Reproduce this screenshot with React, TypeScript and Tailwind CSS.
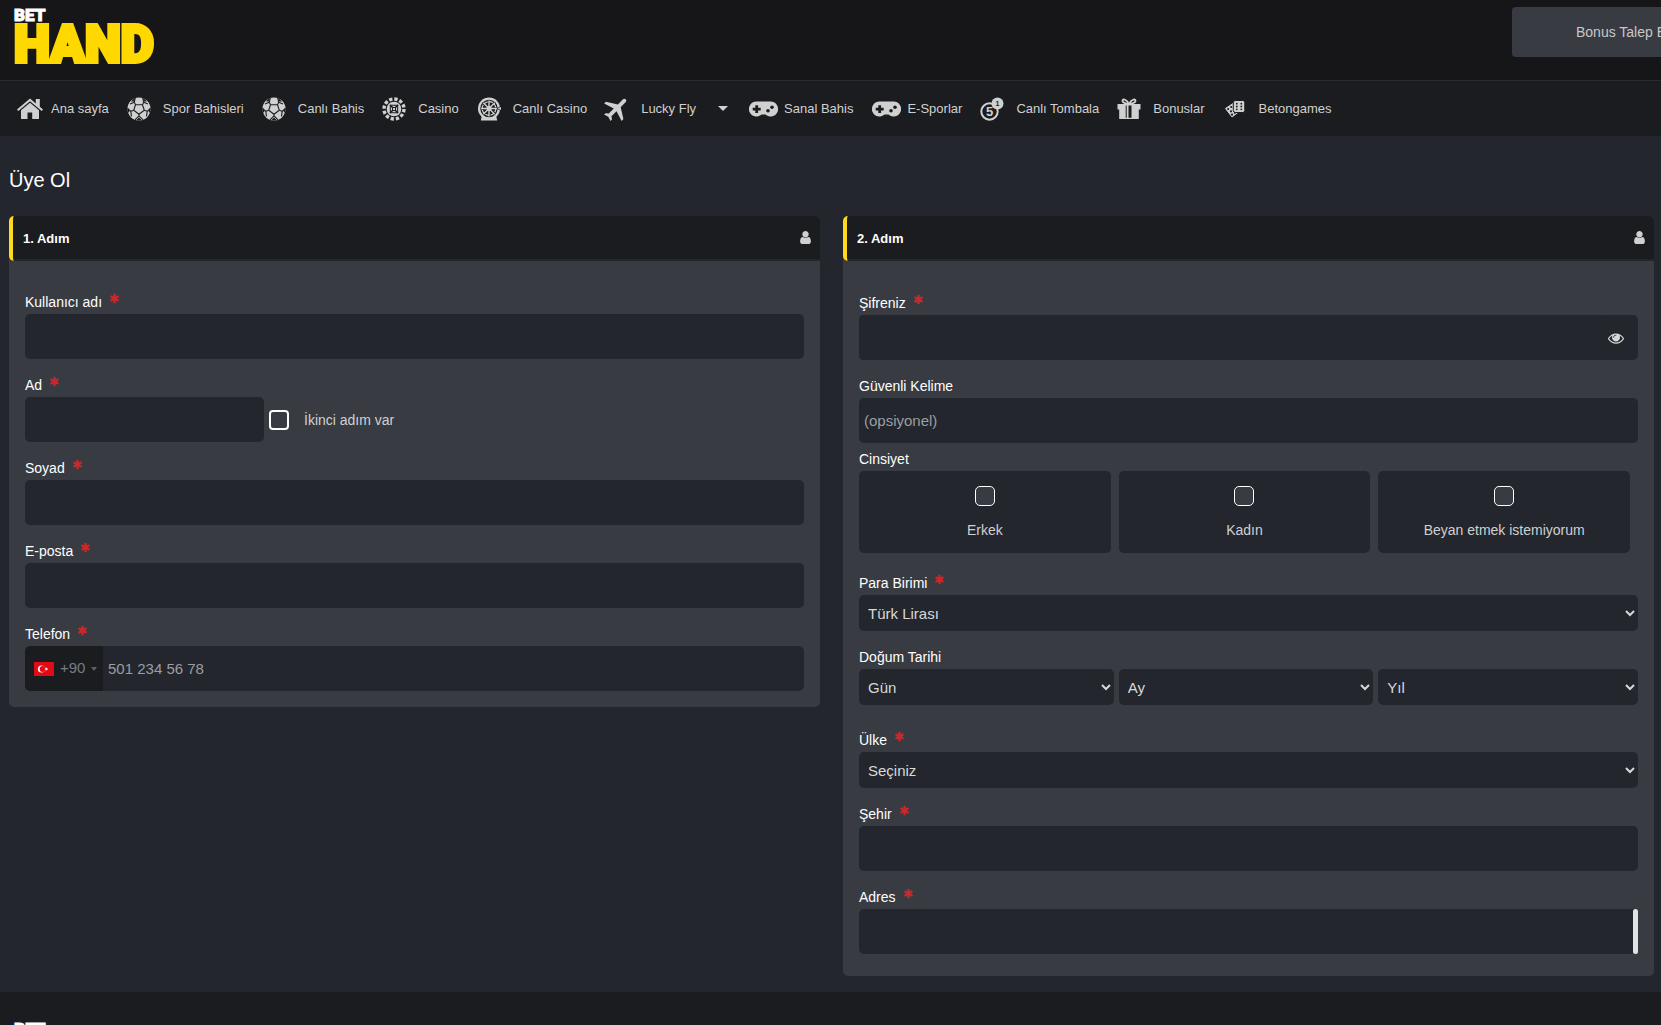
import type { ReactNode } from "react";

const INPUT = "h-[45px] w-full rounded-[5px] bg-[#23262d] px-[5px] text-[15px] text-[#d8d8d8] placeholder:text-[#9c9da0] outline-none";
const SELECT = "h-9 w-full rounded-[5px] bg-[#23262d] pl-[5px] text-[15px] text-[#d8d8d8] outline-none";

function HomeIcon() {
  return (
    <svg width="26" height="22" viewBox="0 0 26 22" fill="currentColor">
      <path d="M13 .5 0 11.500 1.300 13 13 3.300 24.700 13l1.300-1.500-3.200-2.700V1h-4v4.400z" />
      <path d="M13 4.800 4 12.300V21h6.500v-6.500h4.700V21H22v-8.700z" />
    </svg>
  );
}

function BallIcon() {
  return (
    <svg width="24" height="24" viewBox="0 0 24 24">
      <circle cx="12" cy="12" r="11.500" fill="currentColor" />
      <g stroke="#1b1c1f" strokeWidth="1.100" fill="none">
        <path d="M8.500 7.800h7l1.800 5.500-5.300 4-5.300-4z" />
        <path d="M8.500 7.800 7.300 5.200M15.500 7.800l1.200-2.600M17.300 13.300l2.900 1M12 17.300v1.500M6.700 13.300l-2.900 1" />
        <path d="M7.300 5.200 8.300.8M16.700 5.200l-1-4.400M7.300 5.200 3 7M16.700 5.200 21 7" />
        <path d="M3.800 14.300.7 11.500M3.800 14.300l.7 5M20.200 14.300l3.100-2.800M20.200 14.300l-.7 5" />
        <path d="M12 18.800 8 22.800M12 18.800l4 4" />
      </g>
      <g fill="#1b1c1f">
        <path d="M7.800.8 7.300 4.500 4 4.500zM16.200.8l.5 3.700h3.300zM.4 10.500l2.200 3.500-1.600 2zM23.600 10.500 21.400 14l1.600 2zM12 20.500l3 3H9z" />
      </g>
    </svg>
  );
}

function ChipIcon() {
  return (
    <svg width="24" height="24" viewBox="0 0 24 24" fill="none" stroke="currentColor">
      <circle cx="12" cy="12" r="10" strokeWidth="3.400" strokeDasharray="3.300 1.936" />
      <circle cx="12" cy="12" r="7.300" fill="currentColor" stroke="none" />
      <path d="M12 6.800 17.200 12 12 17.200 6.800 12z" stroke="#1b1c1f" strokeWidth="1" transform="rotate(45 12 12)" />
      <path d="m8 8 2.800 2.800M16 8l-2.800 2.800M8 16l2.800-2.800M16 16l-2.800-2.800" stroke="#1b1c1f" strokeWidth="1.600" />
      <path d="M10.500 10.500h3v3h-3z" stroke="#1b1c1f" />
    </svg>
  );
}

function RouletteIcon() {
  return (
    <svg width="24" height="24" viewBox="0 0 24 24">
      <path d="M5.500 16h13l1.700 7.500H3.800z" fill="currentColor" />
      <circle cx="12" cy="11.500" r="11" fill="currentColor" />
      <circle cx="12" cy="11.500" r="8.700" fill="#1b1c1f" />
      <circle cx="12" cy="11.500" r="6.800" fill="none" stroke="currentColor" strokeWidth="1.200" strokeDasharray="3.800 1.540" />
      <path
        d="M12 3.500v16M4 11.500h16M6.300 5.800l11.400 11.400M17.700 5.800 6.300 17.200"
        stroke="currentColor"
        strokeWidth="1.400"
      />
      <circle cx="12" cy="11.500" r="2.500" fill="currentColor" />
      <path d="M19.500 11.500 24 9v5z" fill="#1b1c1f" />
      <path d="m20.500 11.500 3.500-1.500v3z" fill="currentColor" />
    </svg>
  );
}

function PlaneIcon() {
  return (
    <svg width="24" height="24" viewBox="0 0 24 24" fill="currentColor" className="overflow-visible">
      <path
        transform="rotate(45 12 12) translate(-3.600 -3.600) scale(1.300)"
        d="M21 16v-2l-8-5V3.500c0-.83-.67-1.500-1.500-1.500S10 2.670 10 3.500V9l-8 5v2l8-2.500V19l-2 1.500V22l3.500-1 3.500 1v-1.500L13 19v-5.500l8 2.500z"
      />
    </svg>
  );
}

function GamepadIcon() {
  return (
    <svg width="29" height="16" viewBox="0 0 29 16">
      <path d="M7.500.5h14a7.500 7.500 0 1 1-5 13h-4a7.500 7.500 0 1 1-5-13z" fill="currentColor" />
      <path d="M6.300 4.300h2.800v2.500h2.600v2.700H9.100V12H6.300V9.500H3.700V6.800h2.600z" fill="#1b1c1f" />
      <circle cx="19" cy="9.800" r="1.800" fill="#1b1c1f" />
      <circle cx="23" cy="6.300" r="1.800" fill="#1b1c1f" />
    </svg>
  );
}

function BingoIcon() {
  return (
    <svg width="24" height="24" viewBox="0 0 24 24" fontFamily="Liberation Sans, sans-serif" fontWeight="700" textAnchor="middle">
      <circle cx="9.500" cy="14.500" r="8.200" fill="none" stroke="currentColor" strokeWidth="2" />
      <circle cx="17.500" cy="6.500" r="6" fill="currentColor" />
      <text x="9.500" y="19" fontSize="13" fill="currentColor">5</text>
      <text x="17.500" y="9" fontSize="7" fill="#1b1c1f">1</text>
    </svg>
  );
}

function GiftIcon() {
  return (
    <svg width="24" height="22" viewBox="0 0 24 22">
      <g fill="none" stroke="currentColor" strokeWidth="1.800">
        <path d="M12 6C10 1.500 5.500.2 5.500 3c0 2.300 3.500 2.500 6.500 3zM12 6c2-4.500 6.500-5.800 6.500-3 0 2.300-3.500 2.500-6.500 3z" />
      </g>
      <path d="M.5 6h23v5.500h-1.700V21H2.200v-9.500H.5z" fill="currentColor" />
      <path d="M8.700 7.500h1v12.200h-1zM11.500 7.500h3v12.200h-3z" fill="#1b1c1f" />
    </svg>
  );
}

function DiceIcon() {
  return (
    <svg width="22" height="20" viewBox="0 0 22 20">
      <path d="m1.500 9.500 7.500-5L14.500 13 8 18z" fill="currentColor" stroke="currentColor" strokeLinejoin="round" />
      <rect x="9.300" y="1.500" width="11.500" height="12" rx="2" fill="currentColor" stroke="#1b1c1f" />
      <g fill="#1b1c1f">
        <circle cx="12.800" cy="4.700" r=".9" />
        <circle cx="12.800" cy="7.500" r=".9" />
        <circle cx="12.800" cy="10.300" r=".9" />
        <circle cx="17.300" cy="4.700" r=".9" />
        <circle cx="17.300" cy="7.500" r=".9" />
        <circle cx="17.300" cy="10.300" r=".9" />
        <circle cx="4.200" cy="10" r="1.100" />
        <circle cx="7.300" cy="8" r="1.100" />
        <circle cx="7" cy="12.300" r="1.100" />
        <circle cx="8" cy="15.700" r="1.100" />
        <circle cx="10.900" cy="14" r=".9" />
      </g>
    </svg>
  );
}

function UserIcon() {
  return (
    <svg width="15" height="15" viewBox="0 0 1792 1792" fill="#d0d0d0" className="mb-0.5">
      <path d="M1536 1399q0 109-62.500 187t-150.500 78h-854q-88 0-150.500-78t-62.500-187q0-85 8.500-160.500t31.500-152 58.500-131 94-89 134.500-34.500q131 128 313 128t313-128q76 0 134.500 34.500t94 89 58.500 131 31.500 152 8.500 160.500zm-256-887q0 159-112.500 271.500t-271.500 112.500-271.500-112.500-112.500-271.500 112.500-271.500 271.500-112.500 271.500 112.500 112.500 271.500z" />
    </svg>
  );
}

function EyeIcon() {
  return (
    <svg width="16" height="16" viewBox="0 0 1792 1792" fill="#d8d8d8">
      <path d="M1664 960q-152-236-381-353 61 104 61 225 0 185-131.500 316.500t-316.500 131.500-316.500-131.500-131.500-316.500q0-121 61-225-229 117-381 353 133 205 333.500 326.500t434.500 121.500 434.500-121.500 333.500-326.500zm-720-384q0-20-14-34t-34-14q-125 0-214.500 89.500t-89.500 214.500q0 20 14 34t34 14 34-14 14-34q0-86 61-147t147-61q20 0 34-14t14-34zm848 384q0 34-20 69-140 230-376.500 368.500t-499.500 138.500-499.500-139-376.500-368q-20-35-20-69t20-69q140-229 376.500-368t499.500-139 499.500 139 376.500 368q20 35 20 69z" />
    </svg>
  );
}

function RequiredIcon() {
  return (
    <svg width="11" height="11" viewBox="0 0 1792 1792" fill="#c9282d" className="mb-2">
      <path d="M1546 1050q46 26 59.500 77.500t-12.500 97.500l-64 110q-26 46-77.500 59.500t-97.500-12.500l-266-153v307q0 52-38 90t-90 38h-128q-52 0-90-38t-38-90v-307l-266 153q-46 26-97.500 12.500t-77.500-59.500l-64-110q-26-46-12.500-97.500t59.500-77.500l266-154-266-154q-46-26-59.500-77.500t12.500-97.500l64-110q26-46 77.500-59.500t97.500 12.500l266 153v-307q0-52 38-90t90-38h128q52 0 90 38t38 90v307l266-153q46-26 97.500-12.500t77.500 59.500l64 110q26 46 12.500 97.500t-59.500 77.500l-266 154z" />
    </svg>
  );
}

function FlagTr() {
  return (
    <svg width="20" height="14" viewBox="0 0 20 14" className="shrink-0">
      <rect width="20" height="14" fill="#e30a17" />
      <circle cx="7.500" cy="7" r="3.600" fill="#fff" />
      <circle cx="8.600" cy="7" r="2.900" fill="#e30a17" />
      <path d="m10.300 7 1.300-.5.1-1.400.9 1.100 1.300-.4-.8 1.200.8 1.200-1.300-.4-.9 1.100-.1-1.400z" fill="#fff" />
    </svg>
  );
}

function Logo() {
  return (
    <svg width="156" height="64" viewBox="0 0 156 64" role="img" aria-label="Bet Hand" fontFamily="Roboto, sans-serif" fontWeight="900">
      <text x="6" y="14" fontSize="17" fill="#fff" stroke="#fff" strokeWidth="1">BET</text>
      <text x="6" y="55" fontSize="51" fill="#ffd800" stroke="#ffd800" strokeWidth="4">HAND</text>
    </svg>
  );
}

const NAV = [
  { label: "Ana sayfa", icon: <HomeIcon />, wide: true },
  { label: "Spor Bahisleri", icon: <BallIcon /> },
  { label: "Canlı Bahis", icon: <BallIcon /> },
  { label: "Casino", icon: <ChipIcon /> },
  { label: "Canlı Casino", icon: <RouletteIcon /> },
  { label: "Lucky Fly", icon: <PlaneIcon />, caret: true },
  { label: "Sanal Bahis", icon: <GamepadIcon />, wide: true },
  { label: "E-Sporlar", icon: <GamepadIcon />, wide: true },
  { label: "Canlı Tombala", icon: <BingoIcon /> },
  { label: "Bonuslar", icon: <GiftIcon /> },
  { label: "Betongames", icon: <DiceIcon /> },
];

function Panel({ title, bodyClass, children }: { title: string; bodyClass: string; children: ReactNode }) {
  return (
    <section className="rounded-[5px] bg-[#383b42]">
      <div className="flex h-[45px] items-center justify-between rounded-[5px] rounded-br-none border-l-4 border-[#ffd91e] bg-[#1b1c1f] pl-2.5 pr-[7px] shadow-[inset_0_-2px_0_#23262d]">
        <h2 className="text-[13px] font-bold text-white">{title}</h2>
        <UserIcon />
      </div>
      <div className={`px-4 ${bodyClass}`}>{children}</div>
    </section>
  );
}

function Label({ htmlFor, required, children }: { htmlFor?: string; required?: boolean; children: ReactNode }) {
  return (
    <label htmlFor={htmlFor} className="flex h-6 items-center gap-[7px] text-sm text-white">
      {children}
      {required && <RequiredIcon />}
    </label>
  );
}

function TextField({ id, label, required, type = "text", placeholder }: { id: string; label: string; required?: boolean; type?: string; placeholder?: string }) {
  return (
    <div>
      <Label htmlFor={id} required={required}>{label}</Label>
      <input id={id} type={type} placeholder={placeholder} className={`block ${INPUT}`} />
    </div>
  );
}

export default function App() {
  return (
    <div className="flex h-screen flex-col overflow-hidden bg-[#23262d] font-['Liberation_Sans',Arial,sans-serif] text-[#d0d0d0]">
      <header className="shrink-0">
        <div className="flex h-[81px] items-start justify-between border-b border-[#292b30] bg-[#161618] pl-2 pt-[7px]">
          <a href="#"><Logo /></a>
          {/* the button is wider than the room left for it and runs off the right edge */}
          <div className="w-[149px]">
            <button className="h-[50px] w-[222px] whitespace-nowrap rounded bg-[#383b42] pl-16 text-left text-sm text-[#c8c8c8]">Bonus Talep Et</button>
          </div>
        </div>
        <nav className="flex h-[55px] items-center gap-[18px] bg-[#1b1c1f] pl-[15px] text-[13px]">
          {NAV.map((n) => (
            <a key={n.label} href="#" className={`flex shrink-0 items-center ${n.wide ? "gap-1.5" : "gap-3"}`}>
              <span className={`flex justify-center ${n.wide ? "w-[30px]" : "w-6"}`}>{n.icon}</span>
              {n.label}
              {n.caret && <span className="ml-2.5 mr-0.5 border-x-[5px] border-t-[5px] border-x-transparent border-t-[#d0d0d0]" />}
            </a>
          ))}
        </nav>
      </header>

      <main className="shrink-0 pb-4 pl-[9px] pr-[7px] pt-[30px]">
        <h1 className="mb-[22px] text-xl text-white">Üye Ol</h1>
        <form className="grid grid-cols-2 items-start gap-[23px]">
          <Panel title="1. Adım" bodyClass="pb-4 pt-[29px]">
            <div className="flex flex-col gap-3.5">
              <TextField id="username" label="Kullanıcı adı" required />
              <div>
                <Label htmlFor="name" required>Ad</Label>
                <div className="flex items-center gap-[5px]">
                  <div className="w-[239px]">
                    <input id="name" type="text" className={`block ${INPUT}`} />
                  </div>
                  <label className="flex items-center gap-[15px] text-sm">
                    <input type="checkbox" className="size-5 appearance-none rounded border-2 border-white" />
                    İkinci adım var
                  </label>
                </div>
              </div>
              <TextField id="surname" label="Soyad" required />
              <TextField id="email" label="E-posta" type="email" required />
              <div>
                <Label htmlFor="phone" required>Telefon</Label>
                <div className="flex overflow-hidden rounded-[5px]">
                  <button type="button" className="flex w-[78px] shrink-0 items-center gap-1.5 bg-[#1b1c1f] pl-[9px] text-[15px] text-[#747c86]">
                    <FlagTr />
                    +90
                    <span className="border-x-[3px] border-t-4 border-x-transparent border-t-[#5c6066]" />
                  </button>
                  <input id="phone" type="tel" placeholder="501 234 56 78" className={`rounded-l-none ${INPUT}`} />
                </div>
              </div>
            </div>
          </Panel>

          <Panel title="2. Adım" bodyClass="pb-[22px] pt-[30px]">
            <div className="flex flex-col gap-3.5">
              <div>
                <Label htmlFor="password" required>Şifreniz</Label>
                <div className="flex items-center rounded-[5px] bg-[#23262d] pr-3.5">
                  <input id="password" type="password" className={INPUT} />
                  <button type="button" aria-label="Şifreyi göster"><EyeIcon /></button>
                </div>
              </div>
              <TextField id="safeword" label="Güvenli Kelime" placeholder="(opsiyonel)" />
            </div>

            <fieldset className="mb-[18px] mt-1">
              <legend className="block h-6 text-sm leading-6 text-white">Cinsiyet</legend>
              <div className="grid grid-cols-3 gap-2 pr-2">
                {["Erkek", "Kadın", "Beyan etmek istemiyorum"].map((g) => (
                  <label key={g} className="flex h-[82px] flex-col items-center gap-3 rounded-[5px] bg-[#23262d] pt-[15px] text-sm leading-6">
                    <input type="radio" name="gender" className="size-5 appearance-none rounded-[5px] border border-white bg-[#383b42]" />
                    {g}
                  </label>
                ))}
              </div>
            </fieldset>

            <Label htmlFor="currency" required>Para Birimi</Label>
            <select id="currency" className={`block ${SELECT}`}>
              <option>Türk Lirası</option>
            </select>

            <fieldset className="mb-[23px] mt-3.5">
              <legend className="block h-6 text-sm leading-6 text-white">Doğum Tarihi</legend>
              <div className="grid grid-cols-3">
                {["Gün", "Ay", "Yıl"].map((d) => (
                  <div key={d} className="pr-[5px] last:pr-0">
                    <select aria-label={d} className={`block ${SELECT}`}>
                      <option>{d}</option>
                    </select>
                  </div>
                ))}
              </div>
            </fieldset>

            <div className="flex flex-col gap-3.5">
              <div>
                <Label htmlFor="country" required>Ülke</Label>
                <select id="country" className={`block ${SELECT}`}>
                  <option>Seçiniz</option>
                </select>
              </div>
              <TextField id="city" label="Şehir" required />
              <div>
                <Label htmlFor="address" required>Adres</Label>
                <div className="flex">
                  <textarea id="address" className={`block resize-none rounded-r-none py-2 ${INPUT}`} />
                  <span className="w-[5px] shrink-0 rounded-sm bg-[#e2e3e4]" />
                </div>
              </div>
            </div>
          </Panel>
        </form>
      </main>

      <footer className="flex-1 bg-[#1b1c1f] pl-2 pt-[29px]">
        <a href="#"><Logo /></a>
      </footer>
    </div>
  );
}
